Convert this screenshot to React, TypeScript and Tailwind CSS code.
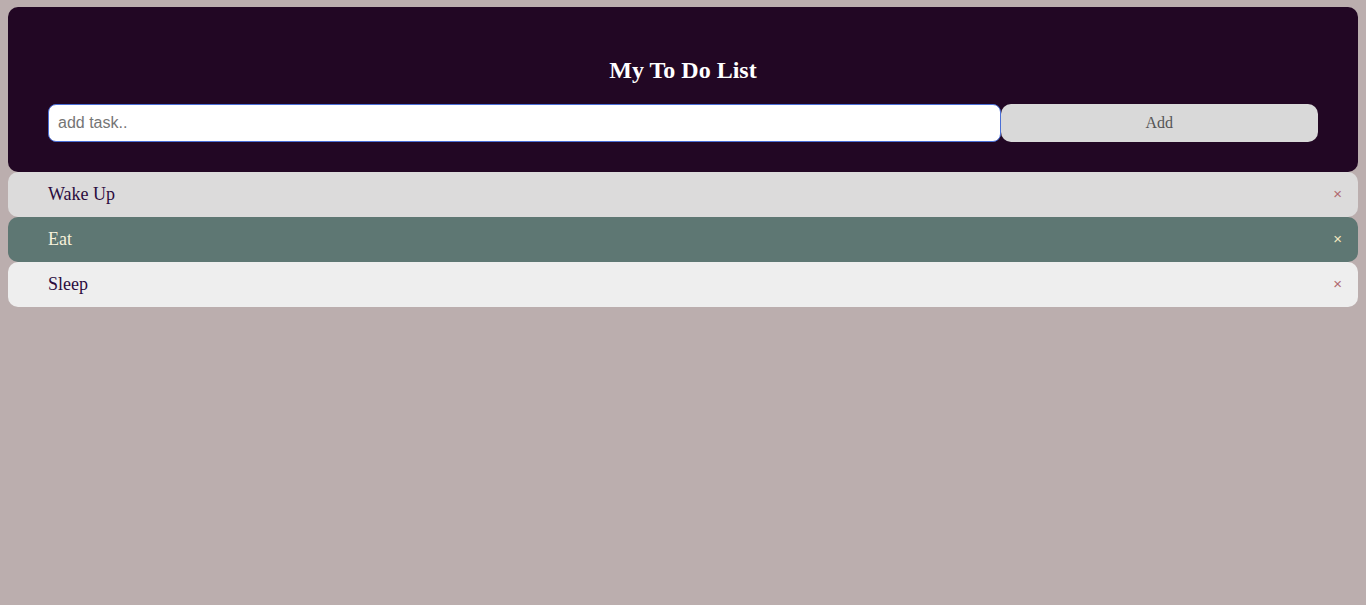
import { useState } from "react";

type Task = { id: number; text: string; done: boolean };

const initial: Task[] = [
  { id: 1, text: "Wake Up", done: false },
  { id: 2, text: "Eat", done: true },
  { id: 3, text: "Sleep", done: false },
];

export default function App() {
  const [tasks, setTasks] = useState<Task[]>(initial);
  const [value, setValue] = useState("");

  const addTask = () => {
    if (!value.trim()) return;
    setTasks([...tasks, { id: Date.now(), text: value, done: false }]);
    setValue("");
  };

  return (
    <div className="min-h-screen bg-[#bbaeae] px-2 pt-[7px] font-['Liberation_Serif',serif]">
      <div className="rounded-[10px] bg-[#220724] px-10 pt-[30px] pb-[30px] text-center">
        <h2 className="mt-[19px] mb-[20px] text-[24px] leading-[28px] font-bold text-white">
          My To Do List
        </h2>
        <div className="flex">
          <input
            value={value}
            onChange={(e) => setValue(e.target.value)}
            placeholder="add task.."
            className="h-[38px] w-3/4 rounded-[8px] border border-[#4b6fd6] bg-white px-[9px] font-['Liberation_Sans',sans-serif] text-[16px] text-black outline-none placeholder:text-[#757575]"
          />
          <button
            onClick={addTask}
            className="h-[38px] w-1/4 rounded-[10px] bg-[#d9d9d9] text-[16px] text-[#555555]"
          >
            Add
          </button>
        </div>
      </div>
      <ul>
        {tasks.map((t, i) => (
          <li
            key={t.id}
            onClick={() =>
              setTasks(tasks.map((x) => (x.id === t.id ? { ...x, done: !x.done } : x)))
            }
            className={
              "flex h-[45px] items-center justify-between rounded-[10px] pl-10 pr-4 text-[18px] " +
              (t.done
                ? "bg-[#5e7773] text-[#f6f0da]"
                : i === 0
                  ? "bg-[#dcdbdb] text-[#2b0c3e]"
                  : "bg-[#eeeeee] text-[#2b0c3e]")
            }
          >
            <span>{t.text}</span>
            <span
              onClick={(e) => {
                e.stopPropagation();
                setTasks(tasks.filter((x) => x.id !== t.id));
              }}
              className={
                "cursor-pointer font-['Liberation_Sans',sans-serif] text-[15px] " +
                (t.done ? "text-[#f3e6bf]" : "text-[#b06a70]")
              }
            >
              ×
            </span>
          </li>
        ))}
      </ul>
    </div>
  );
}
